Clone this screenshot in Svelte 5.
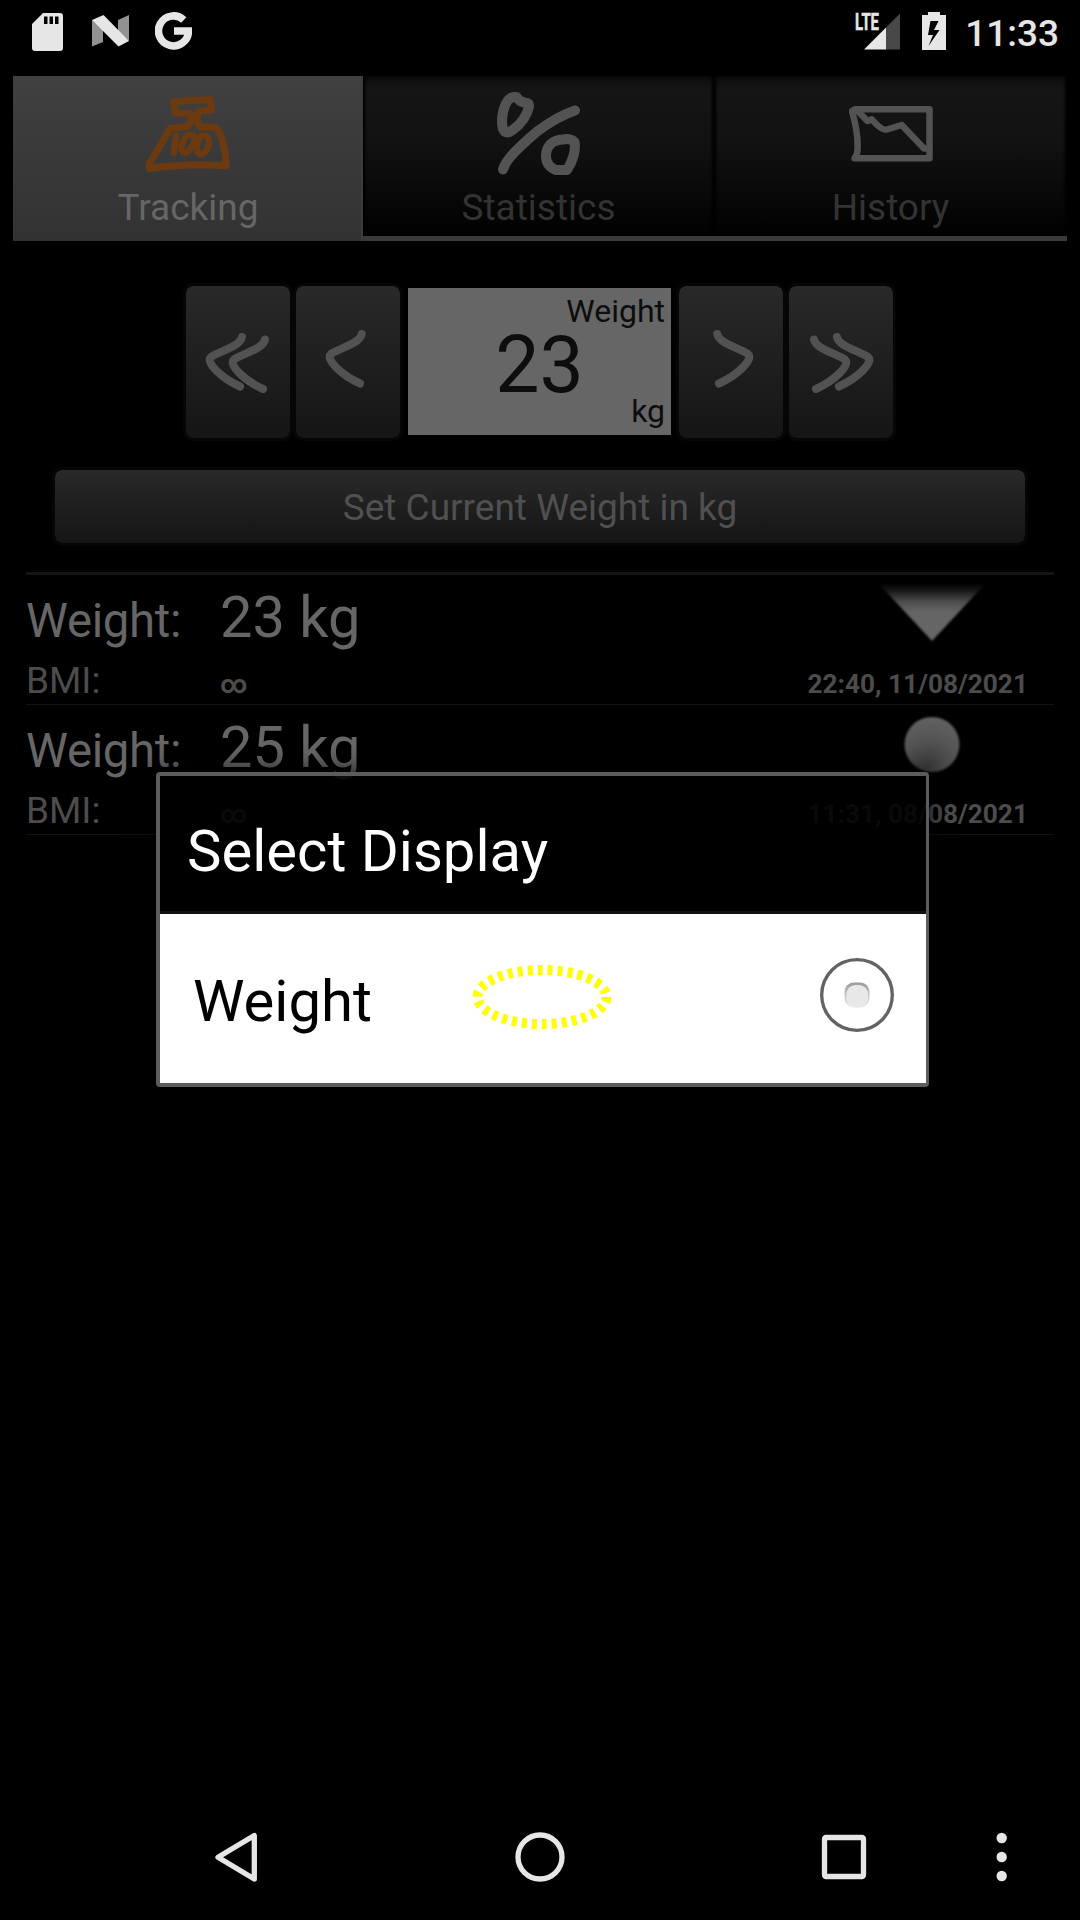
<script>
  const entries = [
    { weight: '23 kg', bmi: '∞', time: '22:40, 11/08/2021', trend: 'down' },
    { weight: '25 kg', bmi: '∞', time: '11:31, 08/08/2021', trend: 'same' },
  ];
</script>

{#snippet chevrons(count, flip)}
  <svg class="chevron" class:flip viewBox="0 0 110 158">
    {#if count === 2}
      <path d="M59 54 C57 64 36 68 28 74 C22 79 38 95 57 103.5" />
      <path d="M82 56.5 C80 66.5 59 70.5 51 76.5 C45 81.5 61 97.5 80 106" />
    {:else}
      <path d="M68.7 51 C66.7 61 46 65 38 71 C32 76 48 92 67 100.5" />
    {/if}
  </svg>
{/snippet}

<div class="screen">
  <header class="status">
    <svg class="sd" viewBox="0 0 31 38">
      <path fill-rule="evenodd" d="M11 0H28a3 3 0 0 1 3 3V35a3 3 0 0 1-3 3H3a3 3 0 0 1-3-3V11ZM12 3.500V11h3.500V3.500ZM17.500 3.500V11H21V3.500ZM23 3.500V11h3.500V3.500Z" />
    </svg>
    <svg class="nougat" viewBox="0 0 37 32">
      <path class="dim" d="M0 5 11 15V27L0 31.500ZM37 0V26L26 17V5Z" />
      <path d="M0 5 11.500 0 37 26 26.500 31.500Z" />
    </svg>
    <svg class="google" viewBox="0 0 37 38">
      <path class="ring" d="M28.800 8A15 15 0 1 0 33.500 19H19" />
    </svg>
    <svg class="signal" viewBox="0 -8 46 46">
      <text x="0" y="16.500" textLength="24" lengthAdjust="spacingAndGlyphs">LTE</text>
      <path d="M9 36.500 31 14.500V36.500Z" />
      <path class="off" d="M31 14.500 45 .5V36.500H31Z" />
    </svg>
    <svg class="battery" viewBox="0 0 24 38">
      <path fill-rule="evenodd" d="M6 0H18V3H24V38H0V3H6ZM8.500 9 6 23H11L6.500 34 17.500 18H12L16.500 9Z" />
    </svg>
    <span class="clock">11:33</span>
  </header>

  <nav class="tabs">
    <div class="tab active">
      <svg viewBox="0 0 84 84">
        <path d="M27.500 9.700 64 7.500 65.700 18 53 19C50.500 24 50.500 31 54 34.700L69 35.300C76 40 80 60 80.300 74Q40 71 3.500 76.500Q2 73 5 69.500L24 36.500 40.700 34.500Q48 30 44.500 21.500L29.500 21Z" />
        <path class="thin" d="M30 43.500 28 60.500M45 43C38 42 34 54 36 59C40 65 49 53 48.500 46Q48 43 45 43ZM59 43.500C52 42 49 56 52 60.500C58 67 64 53 62.500 48Q61 43.500 59 43.500Z" />
      </svg>
      <span>Tracking</span>
    </div>
    <div class="tab">
      <svg class="bold" viewBox="0 0 84 84">
        <path d="M19.700 5.200Q14 4 10.500 9C5 17 4 31 6 37Q9 43 15 38.500C24 32 30 24 32 14.500Q32.500 10.500 28.500 11L23 9Z" />
        <path d="M6 77.500C9 66 27 51 40 39.500Q61 24 78 18.500" />
        <path d="M66 47.500C54 48 49 55 49 64Q49 74 59 78H70C76 69 79 58 77.500 50Q73 46 66 47.500Z" />
      </svg>
      <span>Statistics</span>
    </div>
    <div class="tab">
      <svg viewBox="0 0 84 84">
        <path d="M2.700 19.500 6 17.300H80.500V66.300H5.500Q9 62 8.600 55C9 40 6 30 3.300 20" />
        <path d="M7.700 18 18.500 29 22.700 27.300Q33 39 38 37.500L52.700 33 75 56.500H80" />
      </svg>
      <span>History</span>
    </div>
  </nav>

  <section class="picker">
    <button>{@render chevrons(2, false)}</button>
    <button>{@render chevrons(1, false)}</button>
    <div class="readout">
      <span class="caption">Weight</span>
      <span class="amount">23</span>
      <span class="caption">kg</span>
    </div>
    <button>{@render chevrons(1, true)}</button>
    <button>{@render chevrons(2, true)}</button>
  </section>

  <button class="commit">Set Current Weight in kg</button>

  <ul class="log">
    {#each entries as entry}
      <li>
        <div class="line primary">
          <span class="label">Weight:</span>
          <span class="value">{entry.weight}</span>
          <svg class="trend" viewBox="0 0 108 70">
            <defs>
              <linearGradient id="fall" x1="0" y1="0" x2="0" y2="1">
                <stop offset="0" stop-color="#000" />
                <stop offset=".12" stop-color="#151515" />
                <stop offset=".32" stop-color="#4c4c4c" />
                <stop offset=".5" stop-color="#656565" />
              </linearGradient>
              <radialGradient id="ball" cx=".45" cy=".88" r=".85">
                <stop offset="0" stop-color="#3d3d3d" />
                <stop offset=".5" stop-color="#525252" />
                <stop offset="1" stop-color="#616161" />
              </radialGradient>
            </defs>
            {#if entry.trend === 'down'}
              <path class="soft" d="M0 0H108L54 58Z" fill="url(#fall)" />
            {:else}
              <circle class="soft" cx="54" cy="31.500" r="27.500" fill="url(#ball)" />
            {/if}
          </svg>
        </div>
        <div class="line secondary">
          <span class="label">BMI:</span>
          <span class="bmi">{entry.bmi}</span>
          <time>{entry.time}</time>
        </div>
      </li>
    {/each}
  </ul>

  <footer class="softkeys">
    <svg viewBox="0 0 1080 126">
      <path d="M218 63.300 254.300 41.500V85Z" />
      <circle cx="540" cy="63" r="22" />
      <rect x="824.500" y="43.500" width="39" height="39" rx="1.500" />
      <g class="dots">
        <circle cx="1001.700" cy="44" r="5.200" />
        <circle cx="1001.700" cy="63" r="5.200" />
        <circle cx="1001.700" cy="82" r="5.200" />
      </g>
    </svg>
  </footer>

  <div class="dialog" role="dialog">
    <h1>Select Display</h1>
    <div class="option">
      <span>Weight</span>
      <svg class="marker" viewBox="0 0 140 64">
        <ellipse cx="70" cy="32" rx="64.500" ry="27" />
      </svg>
      <svg class="radio" viewBox="0 0 76 76">
        <defs>
          <linearGradient id="dent" x1="0" y1="0" x2="0" y2="1">
            <stop offset="0" stop-color="#999" />
            <stop offset=".5" stop-color="#c8c8c8" />
            <stop offset="1" stop-color="#eee" />
          </linearGradient>
        </defs>
        <circle cx="38" cy="38" r="35.300" />
        <rect x="25.500" y="25.500" width="25" height="25" rx="9" fill="url(#dent)" />
        <rect x="27.500" y="28" width="21.500" height="22.500" rx="9" fill="#e8e8e8" />
      </svg>
    </div>
  </div>
</div>

<style>
  :global(body) {
    background: #000;
  }

  .screen {
    position: relative;
    display: flex;
    flex-direction: column;
    width: 1080px;
    height: 1920px;
    overflow: hidden;
    background: #000;
    font-family: Roboto, sans-serif;
    font-size: 37px;
  }

  svg {
    display: block;
    flex: none;
  }

  button {
    display: block;
    box-sizing: border-box;
    margin: 0;
    padding: 0;
    border: 3px solid #060606;
    border-radius: 10px;
    background: linear-gradient(#292929, #151515) padding-box;
    color: #505050;
    font: inherit;
  }

  .status {
    display: flex;
    align-items: flex-start;
    box-sizing: border-box;
    height: 76px;
    padding: 12px 21px 0 32px;
    fill: #e6e6e6;
  }
  .sd {
    width: 31px;
    height: 38px;
    margin: 1px 29px 0 0;
  }
  .nougat {
    width: 37px;
    height: 32px;
    margin: 3px 26px 0 0;
  }
  .dim {
    fill: #929292;
  }
  .google {
    width: 37px;
    height: 38px;
  }
  .ring {
    fill: none;
    stroke: #e6e6e6;
    stroke-width: 7.5px;
  }
  .signal {
    width: 46px;
    height: 46px;
    margin: -7px 21px 0 auto;
    font-size: 23px;
    font-weight: 700;
  }
  .signal text {
    stroke: #e6e6e6;
    stroke-width: 0.5px;
  }
  .off {
    fill: #484848;
  }
  .battery {
    width: 24px;
    height: 38px;
    margin-right: 19px;
  }
  .clock {
    color: #e6e6e6;
    font-weight: 500;
    line-height: 44px;
  }

  .tabs {
    display: flex;
    height: 165px;
    margin: 0 13px;
  }
  .tab {
    display: flex;
    flex-direction: column;
    align-items: center;
    box-sizing: border-box;
    width: 351px;
    padding-top: 16px;
    border-bottom: 5px solid #3a3a3a;
    background: linear-gradient(#0a0a0a, #151515 12px, #121212 40%, #010101);
    box-shadow: inset 3px 0 3px -1px #000, inset -3px 0 3px -1px #000;
    color: #333;
    line-height: 44px;
  }
  .tab:last-child {
    width: 353px;
  }
  .tab.active {
    width: 350px;
    border-bottom: 0;
    background: linear-gradient(#404040, #323232);
    box-shadow: inset -2px 0 #3c3c3c;
    color: #666;
  }
  .tab svg {
    width: 84px;
    height: 84px;
    margin-bottom: 10px;
    fill: none;
    stroke: #535353;
    stroke-width: 6.500px;
    stroke-linecap: round;
    stroke-linejoin: round;
    filter: blur(0.5px);
  }
  .tab.active svg {
    stroke: #6b3a10;
    stroke-width: 7.200px;
  }
  .tab svg.bold {
    stroke-width: 10px;
  }
  .thin {
    stroke-width: 6.5px;
  }

  .picker {
    display: flex;
    justify-content: center;
    margin-top: 42px;
    padding-right: 1px;
  }
  .picker button {
    width: 110px;
    height: 158px;
  }
  .chevron {
    width: 110px;
    height: 158px;
    margin: -3px;
    fill: none;
    stroke: #525252;
    stroke-width: 8px;
    stroke-linecap: round;
    stroke-linejoin: round;
    filter: blur(0.5px);
  }
  .flip {
    transform: scaleX(-1);
  }
  .readout {
    display: flex;
    flex-direction: column;
    align-items: flex-end;
    box-sizing: border-box;
    width: 263px;
    height: 147px;
    margin: 5px 5px 6px;
    padding: 5px 6px 0;
    background: #666;
    color: #0d0d0d;
  }
  .caption {
    font-size: 32px;
    line-height: 37px;
  }
  .amount {
    align-self: center;
    margin-top: 7px;
    font-size: 78.750px;
    line-height: 56px;
  }

  .commit {
    width: 976px;
    height: 79px;
    margin: 26px 52px;
    padding-top: 3px;
    line-height: 70px;
  }

  .log {
    margin: 0 26px;
    padding: 0;
    border-top: 3px solid #151515;
    list-style: none;
  }
  .log li {
    box-sizing: border-box;
    height: 130px;
    padding: 7px 26px 0 0;
    border-bottom: 1px solid #121212;
  }
  .line {
    display: flex;
    align-items: baseline;
  }
  .label {
    width: 194px;
  }
  .primary {
    height: 77px;
    color: #666;
    font-size: 47.250px;
  }
  .primary .label {
    letter-spacing: -0.3px;
  }
  .value {
    font-size: 57.750px;
    line-height: 70px;
  }
  .trend {
    align-self: flex-start;
    width: 108px;
    height: 70px;
    margin: 1px 42px 0 auto;
  }
  .soft {
    filter: blur(1px);
  }
  .secondary {
    color: #4c4c4c;
    line-height: 44px;
  }
  .bmi {
    font-size: 26.250px;
    font-weight: 700;
  }
  time {
    margin-left: auto;
    font-size: 26.250px;
    font-weight: 700;
  }

  .softkeys {
    margin-top: auto;
  }
  .softkeys svg {
    width: 1080px;
    height: 126px;
    fill: none;
    stroke: #e6e6e6;
    stroke-width: 5.300px;
    stroke-linejoin: round;
  }
  .dots {
    fill: #e6e6e6;
    stroke: none;
  }

  .dialog {
    position: absolute;
    top: 772px;
    left: 156px;
    box-sizing: border-box;
    width: 773px;
    height: 315px;
    border: solid #5c5c5c;
    border-width: 4px 3px 4px 4px;
    border-radius: 4px;
    background: rgba(0, 0, 0, 0.88);
    box-shadow: 0 0 24px 2px rgba(0, 0, 0, 0.7);
  }
  h1 {
    margin: 0;
    padding: 15px 27px 0;
    border-bottom: 3px solid #121212;
    color: #fff;
    font-size: 58px;
    font-weight: 400;
    line-height: 120px;
  }
  .option {
    display: flex;
    align-items: flex-start;
    box-sizing: border-box;
    height: 169px;
    padding: 6px 31px 0 33px;
    background: #fff;
    color: #000;
    font-size: 58px;
    line-height: 163px;
  }
  .marker {
    width: 140px;
    height: 64px;
    margin: 45px 0 0 100px;
    fill: none;
    stroke: #ff0;
    stroke-width: 10px;
    stroke-dasharray: 5 5;
  }
  .radio {
    width: 76px;
    height: 76px;
    margin: 37px 0 0 auto;
  }
  .radio circle {
    fill: none;
    stroke: #636363;
    stroke-width: 3.300px;
  }
</style>
